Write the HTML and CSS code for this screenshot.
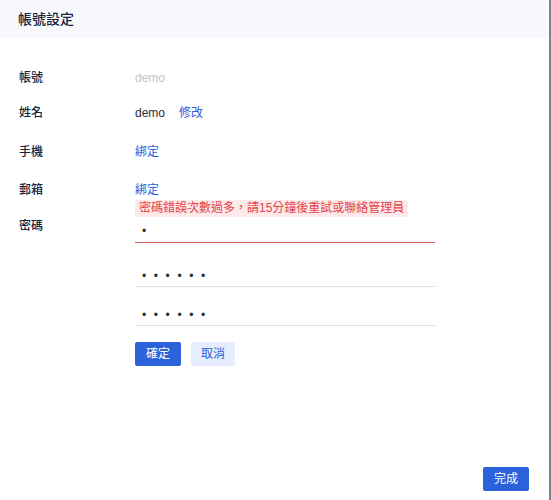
FILE: index.html
```html
<!DOCTYPE html>
<html lang="zh-Hant">
<head>
<meta charset="utf-8">
<title>帳號設定</title>
<link rel="stylesheet" href="styles.css">
</head>
<body>
<div class="dialog">
  <div class="dialog-header">帳號設定</div>
  <div class="dialog-body">
    <div class="row row-account">
      <div class="label">帳號</div>
      <div class="value muted">demo</div>
    </div>
    <div class="row row-name">
      <div class="label">姓名</div>
      <div class="value">demo<a class="link edit">修改</a></div>
    </div>
    <div class="row row-phone">
      <div class="label">手機</div>
      <div class="value"><a class="link">綁定</a></div>
    </div>
    <div class="row row-mail">
      <div class="label">郵箱</div>
      <div class="value"><a class="link">綁定</a></div>
    </div>
    <div class="row row-pw">
      <div class="label label-pw">密碼</div>
      <div class="pw-col">
        <div class="error">密碼錯誤次數過多，請15分鐘後重試或聯絡管理員</div>
        <input class="pw-input pw-first invalid" type="password" value="1">
        <input class="pw-input pw-second" type="password" value="123456">
        <input class="pw-input pw-third" type="password" value="123456">
        <div class="actions">
          <button class="btn btn-primary">確定</button>
          <button class="btn btn-light">取消</button>
        </div>
      </div>
    </div>
  </div>
  <div class="dialog-footer">
    <button class="btn btn-primary">完成</button>
  </div>
</div>
</body>
</html>
```
FILE: styles.css
```css
* { box-sizing: border-box; }
html, body {
  margin: 0;
  padding: 0;
  height: 100%;
}
body {
  background: #7f848e;
  font-family: "Liberation Sans", "Noto Sans CJK TC", sans-serif;
  font-size: 12px;
  color: #1f2d3d;
  overflow: hidden;
}
.dialog {
  width: 549px;
  height: 500px;
  background: #ffffff;
  display: flex;
  flex-direction: column;
}
.dialog-header {
  height: 38px;
  line-height: 39px;
  padding-left: 18px;
  background: #f7f9fc;
  font-size: 14px;
  font-weight: 500;
  color: #16233d;
}
.dialog-body {
  flex: 1;
  padding: 30px 0 0 19px;
}
.row {
  display: flex;
  align-items: flex-start;
  line-height: 20px;
}
.row-name { margin-top: 15px; }
.row-phone { margin-top: 19px; }
.row-mail { margin-top: 18px; }
.label {
  width: 116px;
  flex: none;
  font-weight: 500;
  color: #16233d;
}
.label-pw { padding-top: 16px; }
.value { color: #1f2d3d; }
.muted { color: #c0c4cc; }
.link {
  color: #2a5fd9;
  cursor: pointer;
}
.edit { margin-left: 14px; }
.pw-col {
  width: 300px;
  display: flex;
  flex-direction: column;
}
.error {
  align-self: flex-start;
  background: #fde9ea;
  color: #e2434b;
  line-height: 17px;
  padding: 0 4px;
  border-radius: 2px;
}
.pw-input {
  display: block;
  width: 300px;
  height: 26px;
  border: none;
  border-bottom: 1px solid #dcdfe6;
  outline: none;
  padding: 4px 0 0 7px;
  font-family: "Liberation Sans", sans-serif;
  font-size: 12px;
  letter-spacing: 7.6px;
  color: #1f2d3d;
  background: transparent;
}
.pw-first { padding-top: 2px; }
.invalid { border-bottom-color: #d9625c; }
.pw-second { margin-top: 18px; }
.pw-third { margin-top: 13px; }
.actions {
  display: flex;
  gap: 10px;
  margin-top: 16px;
}
.btn {
  height: 24px;
  padding: 0 11px;
  border: none;
  border-radius: 2px;
  font-family: "Liberation Sans", "Noto Sans CJK TC", sans-serif;
  font-size: 12px;
  line-height: 24px;
  cursor: pointer;
}
.btn-primary {
  background: #2b62dc;
  color: #ffffff;
}
.btn-light {
  background: #e6eefd;
  color: #2a5fd9;
  padding: 0 10px;
}
.dialog-footer {
  display: flex;
  justify-content: flex-end;
  padding: 0 20px 9px 0;
}
```
